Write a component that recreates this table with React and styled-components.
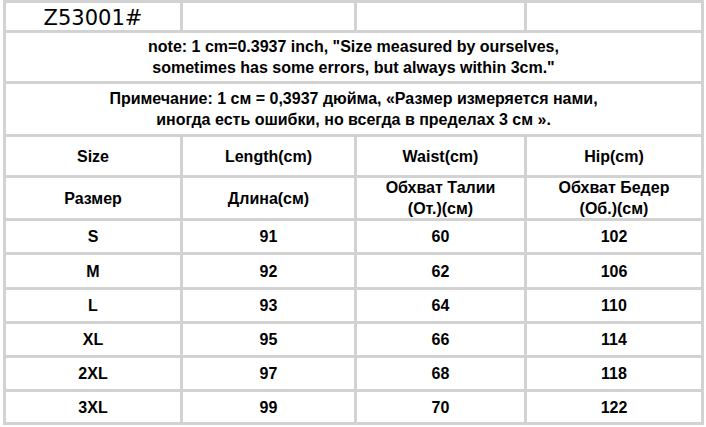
import React from "react";
import styled, { createGlobalStyle } from "styled-components";

const GlobalStyle = createGlobalStyle`
  html, body {
    margin: 0;
    padding: 0;
    background: #ffffff;
  }
`;

const Page = styled.div`
  padding: 0 0 0 3px;
`;

const Chart = styled.div`
  display: grid;
  width: max-content;
  grid-template-columns: 174px 171px 167px 174px;
  grid-template-rows: 27px 48px 50px 38px 40px 31px 32px 31px 31px 31px 30px;
  gap: 3px;
  padding: 3px;
  background: #d2d2d2;
  font-family: "Liberation Sans", Arial, sans-serif;
  font-weight: bold;
  font-size: 16px;
  color: #000;
`;

const Cell = styled.div`
  background: #ffffff;
  display: flex;
  align-items: center;
  justify-content: center;
  text-align: center;
  line-height: 21px;
  white-space: nowrap;
  grid-column: ${(p) => (p.$span ? `span ${p.$span}` : "auto")};
`;

const Code = styled(Cell)`
  align-items: flex-end;
  font-family: "DejaVu Sans", sans-serif;
  font-weight: normal;
  font-size: 21px;
  line-height: 24px;
  overflow: hidden;
`;

const sizes = [
  ["S", 91, 60, 102],
  ["M", 92, 62, 106],
  ["L", 93, 64, 110],
  ["XL", 95, 66, 114],
  ["2XL", 97, 68, 118],
  ["3XL", 99, 70, 122],
];

export default function App() {
  return (
    <Page>
      <GlobalStyle />
      <Chart>
        <Code>Z53001#</Code>
        <Cell />
        <Cell />
        <Cell />
        <Cell $span={4}>
          note: 1 cm=0.3937 inch, "Size measured by ourselves,
          <br />
          sometimes has some errors, but always within 3cm."
        </Cell>
        <Cell $span={4}>
          Примечание: 1 см = 0,3937 дюйма, «Размер измеряется нами,
          <br />
          иногда есть ошибки, но всегда в пределах 3 см ».
        </Cell>
        <Cell>Size</Cell>
        <Cell>Length(cm)</Cell>
        <Cell>Waist(cm)</Cell>
        <Cell>Hip(cm)</Cell>
        <Cell>Размер</Cell>
        <Cell>Длина(см)</Cell>
        <Cell>
          Обхват Талии
          <br />
          (От.)(см)
        </Cell>
        <Cell>
          Обхват Бедер
          <br />
          (Об.)(см)
        </Cell>
        {sizes.map((row) =>
          row.map((v, i) => <Cell key={row[0] + i}>{v}</Cell>)
        )}
      </Chart>
    </Page>
  );
}
